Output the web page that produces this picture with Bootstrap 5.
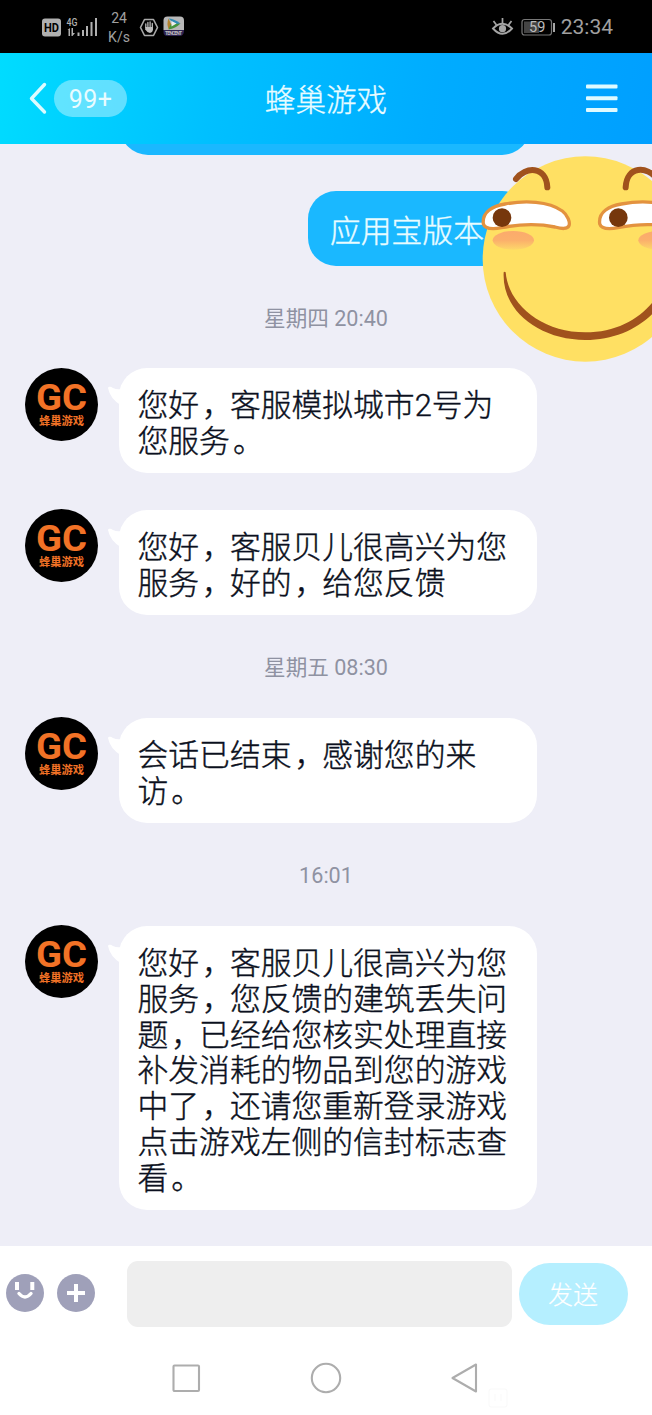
<!DOCTYPE html>
<html lang="zh-CN">
<head>
<meta charset="utf-8">
<meta name="viewport" content="width=device-width, initial-scale=1">
<title>蜂巢游戏</title>
<link href="https://cdn.jsdelivr.net/npm/bootstrap@5.3.0/dist/css/bootstrap.min.css" rel="stylesheet">
<style>
body{font-family:Roboto,"Noto Sans CJK SC",sans-serif;background:#fff;width:652px;height:1415px;overflow:hidden}
svg{display:block;flex:none}
svg text{font-family:Roboto,"Noto Sans CJK SC",sans-serif}
.status{height:53px;background:#000;color:#a0a0a0;padding:0 39px 0 42px}
.speed{font-size:14px;line-height:19px;width:24px;margin-left:9px;padding-top:2px}
.clock{font-size:21px;line-height:53px;margin-left:6px;padding-top:2px}
.topbar{height:91px;background:linear-gradient(100deg,#00dcff 0%,#00c0ff 33%,#00acff 66%,#009fff 100%);color:#e9fcff;padding:0 34px 0 29px}
.side{width:110px}
.unread{width:73px;height:37px;background:rgba(255,255,255,.38);border-radius:19px;font-size:25px;line-height:40px;letter-spacing:.4px;margin-left:6px}
.title{font-size:30.6px;line-height:40px;font-weight:300;padding:5px 0 0 5px;-webkit-text-stroke:.3px}
.chat{height:1102px;background:#eeeef7}
.bubble{border-radius:28px;font-size:30.8px;line-height:35.8px;font-weight:300;white-space:nowrap;-webkit-text-stroke:.4px}
.mine{background:#1ab8ff;color:#e9fcff}
.cut{width:410px;height:60px;margin:-49.5px 0 0 120px}
.sent{width:222px;height:75px;margin:36.500px 0 0 308px;padding:22.5px 22px}
.theirs{width:418px;background:#fff;color:#0b1020;padding:20px 17px 13.900px 19px;margin-left:21px;margin-bottom:.5px}
.tail{left:-11px;top:18px}
.msg{padding-left:24.5px}
.avatar{margin-top:-.5px}
.stamp{height:102px;padding-top:1.500px;font-size:21.6px;line-height:102px;color:#8f92a2}
.gap-msg{height:36px}
.pn{padding-left:3px;margin-right:-3px}
.emoji{left:460px;top:1px}
.composer{height:99px;padding:15px 0 0 6px}
.tool{margin-top:13px;margin-right:13px}
.field{width:385px;height:66px;border-radius:11px;background:#eee;margin-left:18.500px}
.send{width:109px;height:62px;border-radius:31px;background:#b5efff;color:#fff;border:0;font-size:25px;font-weight:300;margin:1.500px 0 0 7px;padding:5px 0 0;-webkit-text-stroke:.2px}
.sysnav{height:70px;padding:15px 0 0 171px}
</style>
<script src="https://cdn.jsdelivr.net/npm/bootstrap@5.3.0/dist/js/bootstrap.bundle.min.js"></script>
</head>
<body>
<div class="status d-flex align-items-center justify-content-between">
  <div class="d-flex align-items-center">
    <svg width="56" height="22" viewBox="0 0 56 22" fill="#b0b0b0">
      <rect x="0" y="2.500" width="19" height="18" rx="3"/>
      <text x="2" y="16" font-size="12.500" font-weight="700" fill="#000" textLength="15" lengthAdjust="spacingAndGlyphs">HD</text>
      <text x="24.500" y="9.500" font-size="11" font-weight="500" textLength="11" lengthAdjust="spacingAndGlyphs">4G</text>
      <path d="M25.500 14l2.500-2v8h-1.500v-6zM29.500 12h1.500v5h2l-2.500 3h-1zM35.500 16.500h2v3.500h-2zM40 14h2v6h-2zM44 10h2v10h-2zM48.500 6h2v14h-2zM53 2h2v18h-2z"/>
    </svg>
    <div class="speed text-center">24<br>K/s</div>
    <svg class="ms-2" width="46" height="22" viewBox="0 0 46 22">
      <path d="M5.500 3.500h9l4 8-4 8h-9l-4-8z" fill="none" stroke="#aaa" stroke-width="1.600" stroke-linejoin="round"/>
      <path d="M6.800 11.500V8M8.900 11V6.500M11.100 11V6M13.300 12V7.500" stroke="#bbb" stroke-width="1.300" stroke-linecap="round"/>
      <path d="M6.200 11h7.800v3q-.4 2.500-3 3-2.500 0-4.800-3.500z" fill="#bbb"/>
      <path d="M28.500 .5h12.500q4 0 4 4v9.500H24.500V4.500q0-4 4-4z" fill="#b8b8b8"/>
      <path d="M24.500 14h20.500v2q-1 4-4 4H28.500q-4 0-4-4z" fill="#2c2250"/>
      <path d="M29.500 2.500q-2 5 0 10.500l5-2-3-4z" fill="#b3822c"/><path d="M29.500 2.500q5 0 12 5l-5 1z" fill="#308cb5"/><path d="M41.500 7.500q-5 5-12 6l2-5z" fill="#45943d"/><path d="M32.500 5l5 2.500-5 3z" fill="#eee"/>
      <text x="26" y="18.500" font-size="5" font-weight="700" fill="#bbb" textLength="17">TENCENT</text>
    </svg>
  </div>
  <div class="d-flex align-items-center">
    <svg width="64" height="22" viewBox="0 0 64 22" fill="none" stroke="#a5a5a5">
      <path d="M2 12.500Q11.500 3 21 12.500Q11.500 23 2 12.500Z" stroke-width="1.900"/><circle cx="11.500" cy="12.700" r="3.600" fill="#a5a5a5" stroke="none"/>
      <path d="M11.500 2v5M2.500 5l3 4M20.500 5l-3 4" stroke-width="1.700"/>
      <rect x="31" y="3.500" width="29.500" height="15.500" rx="2.500" stroke-width="1.200" stroke="#777"/><rect x="33" y="5.500" width="15" height="11.500" fill="#444" stroke="none"/>
      <path d="M63 7v9" stroke-width="2"/><text x="38" y="16.300" font-size="14.500" fill="#bbb" stroke="none">59</text>
    </svg>
    <div class="clock">23:34</div>
  </div>
</div>

<header class="topbar d-flex align-items-center justify-content-between">
  <div class="side d-flex align-items-center">
    <svg width="19" height="34" viewBox="0 0 19 34"><path d="M15.500 2.500L2.500 16.500l13 13.500" fill="none" stroke="#dcfbff" stroke-width="3.400" stroke-linecap="round" stroke-linejoin="round"/></svg>
    <div class="unread text-center">99+</div>
  </div>
  <div class="title">蜂巢游戏</div>
  <div class="side d-flex justify-content-end">
    <svg width="32" height="29" viewBox="0 0 32 29" fill="#e0faff"><rect y=".5" width="31.500" height="4" rx="1"/><rect y="12.300" width="31.500" height="4" rx="1"/><rect y="24" width="31.500" height="4" rx="1"/></svg>
  </div>
</header>

<main class="chat position-relative overflow-hidden">
  <div class="bubble mine cut"></div>
  <div class="bubble mine sent">应用宝版本</div>
  <div class="stamp text-center">星期四 20:40</div>
  <div class="msg d-flex align-items-start">
    <svg class="avatar" width="73" height="73" viewBox="0 0 73 73"><circle cx="36.500" cy="36.500" r="36.500"/><text x="11" y="42.200" textLength="51" lengthAdjust="spacingAndGlyphs" font-size="37" font-weight="700" fill="#f27226">GC</text><text x="14" y="56.500" textLength="45" font-size="11.300" font-weight="700" fill="#f27226">蜂巢游戏</text></svg>
    <div class="bubble theirs position-relative"><svg class="tail position-absolute" width="14" height="20" viewBox="0 0 14 20"><path d="M0 2C1 0 3 1 5 2Q9 4 14 3V20Q2 13 0 2Z" fill="#fff"/></svg>您好<span class="pn">，</span>客服模拟城市2号为<br>您服务<span class="pn">。</span></div>
  </div>
  <div class="gap-msg"></div>
  <div class="msg d-flex align-items-start">
    <svg class="avatar" width="73" height="73" viewBox="0 0 73 73"><circle cx="36.500" cy="36.500" r="36.500"/><text x="11" y="42.200" textLength="51" lengthAdjust="spacingAndGlyphs" font-size="37" font-weight="700" fill="#f27226">GC</text><text x="14" y="56.500" textLength="45" font-size="11.300" font-weight="700" fill="#f27226">蜂巢游戏</text></svg>
    <div class="bubble theirs position-relative"><svg class="tail position-absolute" width="14" height="20" viewBox="0 0 14 20"><path d="M0 2C1 0 3 1 5 2Q9 4 14 3V20Q2 13 0 2Z" fill="#fff"/></svg>您好<span class="pn">，</span>客服贝儿很高兴为您<br>服务<span class="pn">，</span>好的<span class="pn">，</span>给您反馈</div>
  </div>
  <div class="stamp text-center">星期五 08:30</div>
  <div class="msg d-flex align-items-start">
    <svg class="avatar" width="73" height="73" viewBox="0 0 73 73"><circle cx="36.500" cy="36.500" r="36.500"/><text x="11" y="42.200" textLength="51" lengthAdjust="spacingAndGlyphs" font-size="37" font-weight="700" fill="#f27226">GC</text><text x="14" y="56.500" textLength="45" font-size="11.300" font-weight="700" fill="#f27226">蜂巢游戏</text></svg>
    <div class="bubble theirs position-relative"><svg class="tail position-absolute" width="14" height="20" viewBox="0 0 14 20"><path d="M0 2C1 0 3 1 5 2Q9 4 14 3V20Q2 13 0 2Z" fill="#fff"/></svg>会话已结束<span class="pn">，</span>感谢您的来<br>访<span class="pn">。</span></div>
  </div>
  <div class="stamp text-center">16:01</div>
  <div class="msg d-flex align-items-start">
    <svg class="avatar" width="73" height="73" viewBox="0 0 73 73"><circle cx="36.500" cy="36.500" r="36.500"/><text x="11" y="42.200" textLength="51" lengthAdjust="spacingAndGlyphs" font-size="37" font-weight="700" fill="#f27226">GC</text><text x="14" y="56.500" textLength="45" font-size="11.300" font-weight="700" fill="#f27226">蜂巢游戏</text></svg>
    <div class="bubble theirs position-relative"><svg class="tail position-absolute" width="14" height="20" viewBox="0 0 14 20"><path d="M0 2C1 0 3 1 5 2Q9 4 14 3V20Q2 13 0 2Z" fill="#fff"/></svg>您好<span class="pn">，</span>客服贝儿很高兴为您<br>服务<span class="pn">，</span>您反馈的建筑丢失问<br>题<span class="pn">，</span>已经给您核实处理直接<br>补发消耗的物品到您的游戏<br>中了<span class="pn">，</span>还请您重新登录游戏<br>点击游戏左侧的信封标志查<br>看<span class="pn">。</span></div>
  </div>

  <!-- sticker lying over the chat -->
  <svg class="emoji position-absolute" width="192" height="225" viewBox="0 0 576 675">
    <defs><linearGradient id="blush" x2="0" y2="1"><stop offset="0" stop-color="#fbab6c"/><stop offset=".5" stop-color="#fbb06b"/><stop offset="1" stop-color="#fdd769"/></linearGradient></defs>
    <circle cx="376" cy="342" r="308" fill="#ffe063"/>
    <ellipse cx="160" cy="286" rx="62" ry="28" fill="url(#blush)"/><ellipse cx="597" cy="286" rx="62" ry="28" fill="url(#blush)"/>
    <g id="eye">
      <path d="M70 236C66 200 100 183 135 177C195 166 265 168 307 198C323 210 331 232 327 242C322 254 305 251 285 246C225 233 175 238 125 248C98 253 75 253 70 236Z" fill="#fff" stroke="#e3923f" stroke-width="10"/>
      <circle cx="126" cy="218" r="28" fill="#76370c"/>
    </g>
    <use href="#eye" x="349"/>
    <path d="M168 102C195 64 259 62 262 127M497 127C500 62 562 62 591 102" fill="none" stroke="#a0521d" stroke-width="18" stroke-linecap="round"/>
    <path d="M131 382Q133 379 137 382C145 480 248 562 376 562C475 562 550 515 590 455V493C540 550 465 585 376 585C240 585 125 500 131 382Z" fill="#a0521d"/>
  </svg>
</main>

<div class="composer d-flex align-items-start">
  <svg class="tool" width="38" height="38" viewBox="0 0 38 38"><circle cx="19" cy="19" r="19" fill="#9fa0b9"/><path d="M11 8v8M26.300 8v8" stroke="#fff" stroke-width="4"/><path d="M13 19.500Q19 26.500 25 19.500" fill="none" stroke="#fff" stroke-width="3.400" stroke-linecap="round"/></svg>
  <svg class="tool" width="38" height="38" viewBox="0 0 38 38"><circle cx="19" cy="19" r="19" fill="#9fa0b9"/><path d="M10 19h18M19 10v18" stroke="#fff" stroke-width="4"/></svg>
  <div class="field"></div>
  <button class="send btn" type="button">发送</button>
</div>

<nav class="sysnav d-flex align-items-start">
  <svg width="346" height="50" viewBox="0 0 346 50" fill="none" stroke="#adadad" stroke-width="2.100" stroke-linejoin="round">
    <rect x="2.500" y="5.500" width="25.500" height="25.500" rx="1"/>
    <circle cx="155" cy="18" r="14.200"/>
    <path d="M305 4.500v27L281.500 18Z"/>
    <g stroke="#f9f9f9" stroke-width="1"><rect x="318" y="29" width="18" height="18" rx="2"/><path d="M324 34v7M330 34v7"/></g>
  </svg>
</nav>
</body>
</html>
